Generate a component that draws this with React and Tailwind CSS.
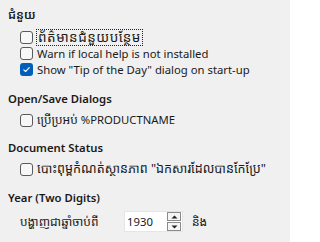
import React from "react";

const FONT = { fontFamily: '"Segoe UI", "Noto Sans", "Noto Sans Khmer", "Khmer OS", sans-serif' };

function Check({ checked }) {
  if (checked) {
    return (
      <span className="w-[13px] h-[13px] rounded-[3px] bg-[#005fb8] flex items-center justify-center shrink-0">
        <svg width="9" height="9" viewBox="0 0 9 9" fill="none">
          <path d="M1.8 4.8 L3.6 6.5 L7.3 2.6" stroke="white" strokeWidth="1.1" strokeLinecap="round" strokeLinejoin="round" />
        </svg>
      </span>
    );
  }
  return <span className="w-[13px] h-[13px] rounded-[3px] border border-[#5a5a5a] bg-[#f7f7f7] shrink-0" />;
}

function Row({ checked, focus, children, className = "" }) {
  return (
    <div className="h-[16px] flex items-center pl-[20px] gap-[3px]">
      <Check checked={checked} />
      {focus ? (
        <span className={"border border-dotted border-[#222] px-[1px] h-[17px] flex items-center leading-none " + className}>{children}</span>
      ) : (
        <span className={"pl-[1px] leading-none whitespace-nowrap " + className}>{children}</span>
      )}
    </div>
  );
}

function Heading({ children, className = "" }) {
  return <div className={"h-[18px] flex items-center pl-[8px] font-semibold leading-none " + className}>{children}</div>;
}

export default function App() {
  return (
    <div className="w-[290px] h-[242px] bg-[#f0f0f0] text-[11.3px] text-[#1a1a1a] overflow-hidden pt-[6px]" style={FONT}>
      <Heading className="text-[12px]">ជំនួយ</Heading>
      <div className="mt-[5.5px]">
        <Row focus className="text-[13.5px] tracking-[0.5px]">ព័ត៌មានជំនួយបន្ថែម</Row>
        <Row>Warn if local help is not installed</Row>
        <Row checked>Show "Tip of the Day" dialog on start-up</Row>
      </div>
      <Heading className="mt-[12.5px]">Open/Save Dialogs</Heading>
      <div className="mt-[4px]">
        <Row><span className="text-[12px]">ប្រើប្រអប់</span> %PRODUCTNAME</Row>
      </div>
      <Heading className="mt-[11px]">Document Status</Heading>
      <div className="mt-[4px]">
        <Row className="text-[12.6px]">បោះពុម្ពកំណត់ស្ថានភាព "ឯកសារដែលបានកែប្រែ"</Row>
      </div>
      <Heading className="mt-[12px]">Year (Two Digits)</Heading>
      <div className="mt-[4px] h-[21px] flex items-center pl-[20px]">
        <span className="leading-none w-[104px] whitespace-nowrap text-[12px]">បង្ហាញជាឆ្នាំចាប់ពី</span>
        <div className="w-[59px] h-[21px] bg-white border border-[#e5e5e5] flex items-center justify-between pl-[2px] pr-[1px]">
          <span className="leading-none">1930</span>
          <div className="flex flex-col gap-[1px]">
            <span className="w-[14px] h-[9px] bg-[#f5f5f5] border border-[#8a8a8a] flex items-center justify-center">
              <svg width="7" height="4" viewBox="0 0 7 4"><path d="M0.5 3.5 L3.5 0.5 L6.5 3.5 Z" fill="#222" /></svg>
            </span>
            <span className="w-[14px] h-[9px] bg-[#f5f5f5] border border-[#8a8a8a] flex items-center justify-center">
              <svg width="7" height="4" viewBox="0 0 7 4"><path d="M0.5 0.5 L3.5 3.5 L6.5 0.5 Z" fill="#222" /></svg>
            </span>
          </div>
        </div>
        <span className="leading-none ml-[9px] text-[12px]">និង</span>
      </div>
    </div>
  );
}
